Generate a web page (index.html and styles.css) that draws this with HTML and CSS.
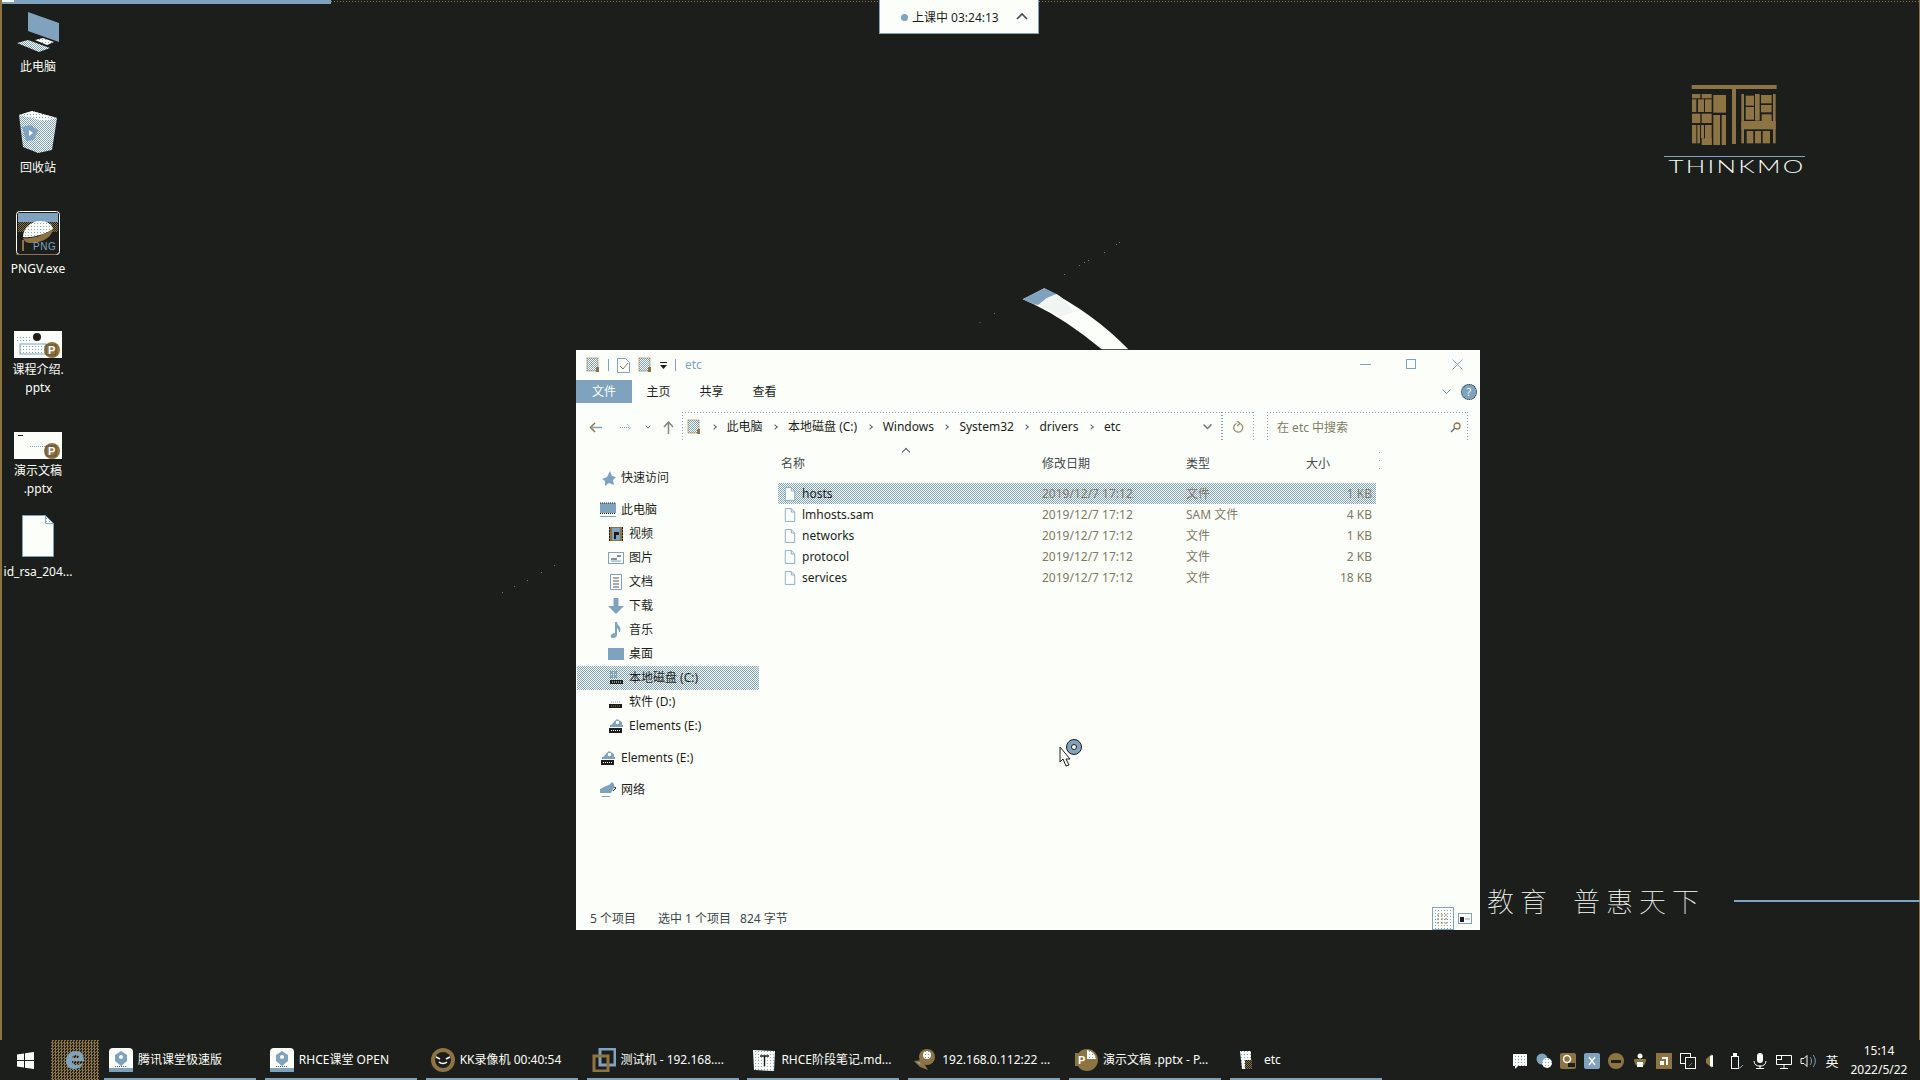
FILE: index.html
```html
<!DOCTYPE html>
<html lang="zh-CN">
<head>
<meta charset="utf-8">
<title>etc</title>
<link rel="stylesheet" href="styles.css">
</head>
<body>
<svg class="defs" aria-hidden="true">
  <defs>
    <pattern id="d-bw" width="2" height="2" patternUnits="userSpaceOnUse"><rect width="2" height="2" fill="#fcfff9"/><rect width="1" height="1" fill="#7fa3bf"/><rect x="1" y="1" width="1" height="1" fill="#7fa3bf"/></pattern>
    <pattern id="d-w" width="3" height="3" patternUnits="userSpaceOnUse"><rect width="3" height="3" fill="#fcfff9"/><rect width="1" height="1" fill="#7fa3bf"/></pattern>
    <pattern id="d-br" width="2" height="2" patternUnits="userSpaceOnUse"><rect width="2" height="2" fill="#1c1e1b"/><rect width="1" height="1" fill="#8f7443"/><rect x="1" y="1" width="1" height="1" fill="#8f7443"/></pattern>
    <symbol id="i-file" viewBox="0 0 14 16"><path d="M1.500.5h7l4 4v11h-11z" fill="#fcfff9" stroke="#7fa3bf"/><path d="M8.500.5v4h4" fill="none" stroke="#7fa3bf"/></symbol>
    <symbol id="i-folderdoc" viewBox="0 0 14 16"><rect x="1" y="1" width="11" height="13" fill="url(#d-bw)" stroke="#8f7443" stroke-width=".6"/><rect x="10" y="10" width="3" height="5" fill="#8f7443"/></symbol>
    <symbol id="i-quick" viewBox="0 0 16 16"><path d="M10 1l2 5 4 1-3 3 1 5-5-2-4 3 0-5-3-2 5-2z" fill="#7fa3bf"/></symbol>
    <symbol id="i-pc" viewBox="0 0 16 16"><rect y="1" width="16" height="10" fill="#7fa3bf"/><path d="M0 1h16" stroke="#1c1e1b" stroke-dasharray="1 1"/><path d="M0 11.500h16" stroke="#1c1e1b" stroke-dasharray="1 1"/><rect y="14" width="16" height="1" fill="#7fa3bf"/></symbol>
    <symbol id="i-video" viewBox="0 0 16 16"><rect x="1" y="1" width="14" height="14" fill="#8f7443"/><rect x="4" y="2" width="8" height="12" fill="#7fa3bf"/><path d="M1.500 1v14M14.500 1v14" stroke="#1c1e1b" stroke-dasharray="2 1"/><path d="M6 6h5v3H8v4H6z" fill="#1c1e1b"/></symbol>
    <symbol id="i-pic" viewBox="0 0 16 16"><rect x=".5" y="2.500" width="15" height="11" fill="#fcfff9" stroke="#7fa3bf"/><path d="M3 9h6M9 6h4" stroke="#1c1e1b"/><path d="M3 11h10" stroke="#7fa3bf"/></symbol>
    <symbol id="i-doc" viewBox="0 0 16 16"><path d="M2.500.5h11v15h-11z" fill="#fcfff9" stroke="#7fa3bf"/><path d="M5 4h6M5 7h6M5 10h6M5 13h6" stroke="#556"/></symbol>
    <symbol id="i-down" viewBox="0 0 16 16"><path d="M5.500 0h5v8H16l-8 8-8-8h5.500z" fill="#7fa3bf"/></symbol>
    <symbol id="i-music" viewBox="0 0 16 16"><path d="M7 0h2c0 4 5 4 3 10h-1c0-2-1-3-2-4v7c0 2-2 3-4 3s-3-2-2-3 2-2 4-2z" fill="#7fa3bf"/></symbol>
    <symbol id="i-desk" viewBox="0 0 16 16"><rect y="2" width="16" height="12" fill="#7fa3bf"/></symbol>
    <symbol id="i-win" viewBox="0 0 16 16"><rect x="2" y="1" width="3" height="3" fill="#7fa3bf"/><rect x="6" y="1" width="3" height="3" fill="#7fa3bf"/><rect x="2" y="5" width="3" height="3" fill="#7fa3bf"/><rect x="6" y="5" width="3" height="3" fill="#7fa3bf"/><rect x="2" y="10" width="13" height="4" fill="#1c1e1b"/><path d="M4 12h9" stroke="#fcfff9" stroke-dasharray="1 1"/></symbol>
    <symbol id="i-drive" viewBox="0 0 16 16"><path d="M3 8h10" stroke="#7fa3bf" stroke-dasharray="1 1"/><rect x="1" y="10" width="13" height="4" fill="#1c1e1b"/><path d="M3 12h9" stroke="#8f7443" stroke-dasharray="1 1"/></symbol>
    <symbol id="i-ext" viewBox="0 0 16 16"><path d="M9 1l5 3v3H3z" fill="#7fa3bf"/><path d="M8 3h3v3H8z" fill="#fcfff9"/><rect x="2" y="7" width="13" height="2" fill="#7fa3bf"/><rect x="1" y="10" width="13" height="5" fill="#1c1e1b"/><path d="M3 12.500h9" stroke="#fcfff9" stroke-dasharray="1 1"/></symbol>
    <symbol id="i-net" viewBox="0 0 16 16"><path d="M0 7l6-3 3-1 3-3 2 2v4l-3 5H0z" fill="#7fa3bf"/><path d="M14 5l2 1-3 3" stroke="#1c1e1b" fill="none"/><rect x="2" y="14" width="8" height="1" fill="#7fa3bf"/></symbol>
    <symbol id="i-tk" viewBox="0 0 24 24"><rect width="24" height="24" rx="4" fill="#fcfff9"/><path d="M12 3l6 4v6l-6 5-6-5V7z" fill="#7fa3bf"/><circle cx="12" cy="9" r="2" fill="#fcfff9"/><rect y="20" width="24" height="4" fill="#7fa3bf"/><path d="M6 18.500h12" stroke="#556" stroke-dasharray="1 1"/></symbol>
  </defs>
</svg>

<main class="desktop">
  <div class="progress"><span class="progress-head"></span></div>
  <div class="top-dots"></div>
  <div class="edge-left"></div>
  <div class="edge-right"></div>

  <div class="dicon d1">
    <svg class="dimg" width="48" height="44" viewBox="14 10 48 44"><path d="M28 12l31 11v19L28 31z" fill="#7fa3bf"/><path d="M35 40l8-2 11 4-7 3z" fill="url(#d-w)"/><path d="M17 43l11-3 22 8-11 4z" fill="url(#d-bw)"/></svg>
    <span class="dlabel">此电脑</span>
  </div>
  <div class="dicon d2">
    <svg class="dimg" width="44" height="44" viewBox="16 110 44 44"><path d="M19 115l13-4 25 7-5 32-14 3-15-6z" fill="url(#d-bw)"/><path d="M32 111l25 7-14 3-11-3-13-3z" fill="url(#d-w)"/><path d="M22 127l8-2 8 5-4 10-8 1z" fill="#7fa3bf"/><path d="M29 130l4 3-4 3z" fill="#fcfff9"/></svg>
    <span class="dlabel">回收站</span>
  </div>
  <div class="dicon d3">
    <svg class="dimg" width="44" height="44" viewBox="0 0 44 44"><rect x=".5" y=".5" width="43" height="43" rx="3" fill="#1c1e1b" stroke="#fcfff9"/><path d="M.5 43.500h40" stroke="#8f7443"/><rect x="2" y="2" width="40" height="9" fill="#7fa3bf"/><rect x="2" y="11" width="40" height="10" fill="url(#d-br)"/><path d="M7 26c0-9 8-16 17-16 7 0 12 3 13 8-9 6-22 9-30 8z" fill="url(#d-w)"/><path d="M7 27c9 1 19-2 30-9-1 8-10 13-20 14-5 0-8 0-10-5z" fill="#8f7443"/><rect x="6" y="29" width="2" height="11" fill="#8f7443"/><text class="png-txt" x="17" y="39">PNG</text></svg>
    <span class="dlabel">PNGV.exe</span>
  </div>
  <div class="dicon d4">
    <svg class="dimg" width="48" height="27" viewBox="0 0 48 27"><rect width="48" height="27" fill="#fcfff9"/><rect x="3" y="4" width="14" height="8" fill="url(#d-w)"/><rect x="6" y="13" width="26" height="10" fill="url(#d-w)" stroke="#7fa3bf"/><circle cx="23" cy="6" r="4" fill="#1c1e1b"/><circle cx="38" cy="19" r="8" fill="#8f7443"/><rect x="32" y="14" width="10" height="10" fill="#8f7443" stroke="#1c1e1b" stroke-width=".4"/><text class="p-txt" x="34" y="23">P</text></svg>
    <span class="dlabel">课程介绍.<br>pptx</span>
  </div>
  <div class="dicon d5">
    <svg class="dimg" width="48" height="27" viewBox="0 0 48 27"><rect width="48" height="27" fill="#fcfff9"/><path d="M4 3.500h5" stroke="#1c1e1b"/><path d="M16 14.500h15" stroke="#7fa3bf" stroke-dasharray="1 1"/><circle cx="38" cy="19" r="8" fill="#8f7443"/><rect x="32" y="14" width="10" height="10" fill="#8f7443" stroke="#1c1e1b" stroke-width=".4"/><text class="p-txt" x="34" y="23">P</text></svg>
    <span class="dlabel">演示文稿<br>.pptx</span>
  </div>
  <div class="dicon d6">
    <svg class="dimg" width="32" height="42" viewBox="0 0 32 42"><path d="M.5.500h23l8 8v33H.5z" fill="#fcfff9" stroke="#7fa3bf"/><path d="M23.500.500v8h8z" fill="url(#d-w)" stroke="#7fa3bf"/></svg>
    <span class="dlabel">id_rsa_204...</span>
  </div>

  <svg class="swirl" width="250" height="140" viewBox="0 0 750 420"><path d="M218 238L283 205Q430 280 535 388H455Q350 300 250 252z" fill="#fcfff9"/><path d="M218 238L283 205 320 222 290 235 265 255 250 252z" fill="#7fa3bf"/><path d="M265 255L290 235 320 222Q350 240 370 275L335 290z" fill="url(#d-w)"/><g fill="#8f7443"><rect x="88" y="306" width="3" height="3"/><rect x="132" y="279" width="3" height="3"/><rect x="342" y="162" width="3" height="3"/><rect x="387" y="135" width="3" height="3"/><rect x="402" y="126" width="3" height="3"/><rect x="414" y="120" width="3" height="3"/><rect x="462" y="96" width="3" height="3"/><rect x="498" y="72" width="3" height="3"/><rect x="507" y="66" width="3" height="3"/></g></svg>
  <svg class="specks" width="70" height="40" viewBox="0 0 70 40"><g fill="#8f7443"><rect x="2" y="32" width="1" height="1"/><rect x="14" y="26" width="1" height="1"/><rect x="27" y="20" width="1" height="1"/><rect x="41" y="12" width="1" height="1"/><rect x="54" y="5" width="1" height="1"/></g></svg>

  <div class="classbar">
    <span class="class-dot"></span>
    <span class="class-text">上课中 03:24:13</span>
    <svg class="class-caret" width="12" height="8" viewBox="0 0 12 8"><path d="M1 7l5-5 5 5" fill="none" stroke="#3b4a56" stroke-width="1.600"/></svg>
  </div>

  <div class="logo">
    <svg width="200" height="88" viewBox="0 0 600 264"><g fill="#8f7443"><rect x="155" y="45" width="255" height="12"/><rect x="276" y="57" width="12" height="165"/><rect x="156" y="72" width="25" height="13"/><rect x="185" y="72" width="30" height="13"/><rect x="156" y="88" width="13" height="38"/><rect x="174" y="88" width="18" height="38"/><rect x="195" y="88" width="20" height="38"/><rect x="220" y="75" width="38" height="53"/><rect x="156" y="131" width="25" height="28"/><rect x="185" y="131" width="30" height="28"/><rect x="220" y="135" width="20" height="90"/><rect x="245" y="135" width="13" height="90"/><rect x="156" y="165" width="13" height="55"/><rect x="172" y="165" width="8" height="55"/><rect x="183" y="165" width="9" height="40"/><rect x="195" y="165" width="20" height="60"/><rect x="185" y="205" width="30" height="20"/><rect x="304" y="72" width="8" height="148"/><rect x="345" y="72" width="14" height="80"/><rect x="317" y="77" width="25" height="30"/><rect x="317" y="111" width="25" height="38"/><rect x="363" y="75" width="32" height="25"/><rect x="363" y="105" width="32" height="22"/><rect x="365" y="133" width="30" height="20"/><rect x="399" y="72" width="8" height="148"/><rect x="304" y="153" width="103" height="25"/><rect x="320" y="183" width="20" height="37"/><rect x="345" y="183" width="18" height="37"/><rect x="368" y="183" width="22" height="37"/></g><rect x="72" y="258" width="423" height="3" fill="#7fa3bf"/></svg>
    <div class="logo-text">THINKMO</div>
  </div>

  <div class="slogan"><span>教育</span><span>普惠天下</span></div>
  <div class="slogan-line"></div>

  <section class="win">
    <header class="titlebar">
      <svg class="qa" width="14" height="16" viewBox="0 0 14 16"><use href="#i-folderdoc"/></svg>
      <span class="qa-sep"></span>
      <svg class="qa qa-check" width="13" height="16" viewBox="0 0 13 16"><path d="M.5 1.500h8l4 4v10H.5z" fill="#fcfff9" stroke="#7fa3bf"/><path d="M3 9l3 3 5-6" fill="none" stroke="#8f7443"/></svg>
      <svg class="qa qa-third" width="14" height="16" viewBox="0 0 14 16"><use href="#i-folderdoc"/></svg>
      <svg class="qa qa-drop" width="7" height="7" viewBox="0 0 7 7"><path d="M0 0h7v1H0zM0 3h7L3.500 7z" fill="#1c1e1b"/></svg>
      <span class="qa-sep"></span>
      <span class="title">etc</span>
      <div class="winctl">
        <svg width="11" height="11" viewBox="0 0 11 11"><path d="M0 5.500h11" stroke="#7fa3bf"/></svg>
        <svg width="11" height="11" viewBox="0 0 11 11"><rect x=".5" y=".5" width="9" height="9" fill="none" stroke="#7fa3bf"/></svg>
        <svg width="11" height="11" viewBox="0 0 11 11"><path d="M.5.500l10 10M10.500.500l-10 10" stroke="#7fa3bf"/></svg>
      </div>
    </header>

    <nav class="tabs">
      <span class="tab tab-active">文件</span>
      <span class="tab">主页</span>
      <span class="tab">共享</span>
      <span class="tab">查看</span>
      <svg class="collapse" width="9" height="6" viewBox="0 0 9 6"><path d="M.5.500l4 4 4-4" fill="none" stroke="#7fa3bf"/></svg>
      <span class="help">?</span>
    </nav>

    <div class="addr-row">
      <div class="navbtns">
        <svg class="nav-back" width="13" height="11" viewBox="0 0 13 11"><path d="M6 1L1.500 5.500 6 10" fill="none" stroke="#8f7443" stroke-width="1.500"/><path d="M2 5.500h11" stroke="#7fa3bf" stroke-width="1.500"/></svg>
        <svg class="nav-fwd" width="11" height="9" viewBox="0 0 11 9"><path d="M7 1l3.500 3.500L7 8M0 4.500h10" fill="none" stroke="#7fa3bf" stroke-dasharray="1 1"/></svg>
        <svg class="nav-drop" width="6" height="4" viewBox="0 0 6 4"><path d="M.5.500L3 3 5.500.500" fill="none" stroke="#6c7a80"/></svg>
        <svg class="nav-up" width="11" height="13" viewBox="0 0 11 13"><path d="M1 6l4.500-5L10 6M5.500 1.500V13" fill="none" stroke="#7a8a80" stroke-width="1.500"/></svg>
      </div>
      <div class="addr dots">
        <svg class="addr-ico" width="14" height="16" viewBox="0 0 14 16"><use href="#i-folderdoc"/></svg>
        <span class="crumb-sep"></span><span class="crumb">此电脑</span>
        <span class="crumb-sep"></span><span class="crumb">本地磁盘 (C:)</span>
        <span class="crumb-sep"></span><span class="crumb">Windows</span>
        <span class="crumb-sep"></span><span class="crumb">System32</span>
        <span class="crumb-sep"></span><span class="crumb">drivers</span>
        <span class="crumb-sep"></span><span class="crumb">etc</span>
        <svg class="addr-drop" width="9" height="6" viewBox="0 0 9 6"><path d="M.5.500l4 4 4-4" fill="none" stroke="#6c7a80" stroke-width="1.500"/></svg>
      </div>
      <div class="refresh dots">
        <svg width="11" height="12" viewBox="0 0 11 12"><path d="M7 2.500a4.500 4.500 0 1 1-3.500 0M4 0l3 2.500L4 5" fill="none" stroke="#8f8a60" stroke-width="1.200"/></svg>
      </div>
      <div class="search dots">
        <span class="search-text">在 etc 中搜索</span>
        <svg width="11" height="11" viewBox="0 0 11 11"><circle cx="7" cy="4" r="3" fill="none" stroke="#8f7443" stroke-width="1.300"/><path d="M5 6l-4 4" stroke="#6c7a80" stroke-width="1.600"/></svg>
      </div>
    </div>

    <div class="content">
      <aside class="side">
        <div class="srow l1"><svg class="sico"><use href="#i-quick"/></svg>快速访问</div>
        <div class="sgroup">
          <div class="srow l1"><svg class="sico"><use href="#i-pc"/></svg>此电脑</div>
          <div class="srow l2"><svg class="sico"><use href="#i-video"/></svg>视频</div>
          <div class="srow l2"><svg class="sico"><use href="#i-pic"/></svg>图片</div>
          <div class="srow l2"><svg class="sico"><use href="#i-doc"/></svg>文档</div>
          <div class="srow l2"><svg class="sico"><use href="#i-down"/></svg>下载</div>
          <div class="srow l2"><svg class="sico"><use href="#i-music"/></svg>音乐</div>
          <div class="srow l2"><svg class="sico"><use href="#i-desk"/></svg>桌面</div>
          <div class="srow l2 dither"><svg class="sico"><use href="#i-win"/></svg>本地磁盘 (C:)</div>
          <div class="srow l2"><svg class="sico"><use href="#i-drive"/></svg>软件 (D:)</div>
          <div class="srow l2"><svg class="sico"><use href="#i-ext"/></svg>Elements (E:)</div>
        </div>
        <div class="sgroup2"><div class="srow l1"><svg class="sico"><use href="#i-ext"/></svg>Elements (E:)</div></div>
        <div class="sgroup2"><div class="srow l1"><svg class="sico"><use href="#i-net"/></svg>网络</div></div>
      </aside>

      <section class="list">
        <div class="lhead">
          <span class="sort-caret"></span>
          <span class="h-name">名称</span><span>修改日期</span><span>类型</span><span>大小</span>
        </div>
        <div class="lrow dither"><span class="fname"><svg class="fico"><use href="#i-file"/></svg>hosts</span><span class="meta">2019/12/7 17:12</span><span class="meta">文件</span><span class="meta size">1 KB</span></div>
        <div class="lrow"><span class="fname"><svg class="fico"><use href="#i-file"/></svg>lmhosts.sam</span><span class="meta">2019/12/7 17:12</span><span class="meta">SAM 文件</span><span class="meta size">4 KB</span></div>
        <div class="lrow"><span class="fname"><svg class="fico"><use href="#i-file"/></svg>networks</span><span class="meta">2019/12/7 17:12</span><span class="meta">文件</span><span class="meta size">1 KB</span></div>
        <div class="lrow"><span class="fname"><svg class="fico"><use href="#i-file"/></svg>protocol</span><span class="meta">2019/12/7 17:12</span><span class="meta">文件</span><span class="meta size">2 KB</span></div>
        <div class="lrow"><span class="fname"><svg class="fico"><use href="#i-file"/></svg>services</span><span class="meta">2019/12/7 17:12</span><span class="meta">文件</span><span class="meta size">18 KB</span></div>
      </section>
    </div>

    <footer class="status">
      <span>5 个项目</span><span class="st2">选中 1 个项目</span><span class="st3">824 字节</span>
      <div class="views">
        <svg width="22" height="23" viewBox="0 0 22 23"><rect x=".5" y=".5" width="21" height="22" fill="url(#d-w)" stroke="#7fa3bf"/><path d="M5 8h12M5 12h12M5 16h12" stroke="#8f7443" stroke-dasharray="2 2"/></svg>
        <svg width="14" height="11" viewBox="0 0 14 11"><rect x=".5" y=".5" width="13" height="10" fill="#fcfff9" stroke="#7fa3bf"/><rect x="2" y="4" width="4" height="5" fill="#1c1e1b"/><path d="M7 6h5" stroke="#7fa3bf"/></svg>
      </div>
    </footer>
  </section>

  <svg class="cursor" width="24" height="28" viewBox="0 0 24 28"><path d="M1 8v15l3-3 3 7 3-1-3-6h4z" fill="#fcfff9" stroke="#1c1e1b"/><ellipse cx="15" cy="8" rx="7.500" ry="7.500" fill="#7fa3bf" stroke="#1c1e1b"/><circle cx="15" cy="8" r="2.500" fill="#fcfff9" stroke="#1c1e1b"/></svg>
</main>

<footer class="taskbar">
  <div class="start"><svg width="17" height="17" viewBox="0 0 17 17"><path d="M0 2.500l7-1v6.500H0zM8 1.300L17 0v8H8zM0 9h7v6.500l-7-1zM8 9h9v8l-9-1.300z" fill="#fcfff9"/></svg></div>
  <div class="edge"><svg width="20" height="20" viewBox="0 0 20 20"><path d="M17 15c-2 3-5 4-8 4-5 0-8-3-8-8C1 5 5 1 11 1c5 0 8 3 8 10H7c0 3 2 4 5 4 2 0 4-1 5-2zM7 8h7c0-2-1-3-3-3-2 0-4 1-4 3z" fill="#7fa3bf"/></svg></div>
  <div class="apps">
    <div class="app"><svg class="aico"><use href="#i-tk"/></svg>腾讯课堂极速版</div>
    <div class="app"><svg class="aico"><use href="#i-tk"/></svg>RHCE课堂 OPEN</div>
    <div class="app"><svg class="aico" viewBox="0 0 24 24"><ellipse cx="12" cy="12" rx="12" ry="12" fill="#8f7443"/><ellipse cx="12" cy="12" rx="8" ry="8" fill="#1c1e1b"/><path d="M5 9l4 2M19 9l-4 2M8 14c2 2 6 2 8 0" stroke="#fcfff9" stroke-width="1.500" fill="none"/></svg>KK录像机 00:40:54</div>
    <div class="app"><svg class="aico" viewBox="0 0 24 24"><rect x="8" y="1" width="15" height="16" fill="none" stroke="#7fa3bf" stroke-width="3"/><rect x="2" y="8" width="14" height="15" fill="none" stroke="#8f7443" stroke-width="3"/></svg>测试机 - 192.168....</div>
    <div class="app"><svg class="aico" viewBox="0 0 24 24"><path d="M1 2l22 1-1 20-20-1z" fill="url(#d-w)"/><path d="M8 8h9M12.500 8v10" stroke="#1c1e1b" stroke-width="1.500"/></svg>RHCE阶段笔记.md...</div>
    <div class="app"><svg class="aico" viewBox="0 0 24 24"><circle cx="14" cy="9" r="8" fill="#8f7443"/><circle cx="14" cy="7" r="4" fill="url(#d-w)"/><path d="M1 13l8-1 6 10-8-3z" fill="#8f7443"/><path d="M3 14l4 0 1 3z" fill="#7fa3bf"/></svg>192.168.0.112:22 ...</div>
    <div class="app"><svg class="aico" viewBox="0 0 24 24"><circle cx="13" cy="12" r="11" fill="#8f7443"/><path d="M13 2a10 10 0 0 1 9 9h-9z" fill="url(#d-w)"/><rect x="1" y="5" width="12" height="13" fill="#8f7443"/><text class="p-txt" x="4" y="16">P</text></svg>演示文稿 .pptx - P...</div>
    <div class="app"><svg class="aico" viewBox="0 0 24 24"><path d="M5 3h11v18H7z" fill="url(#d-w)"/><rect x="10" y="12" width="7" height="9" fill="url(#d-br)"/></svg>etc</div>
  </div>
  <div class="tray">
    <svg class="tico" viewBox="0 0 16 16"><path d="M1 1h14v12H6l-3 3v-3H1z" fill="url(#d-w)"/></svg>
    <svg class="tico" viewBox="0 0 16 16"><circle cx="6" cy="6" r="5.500" fill="#7fa3bf"/><circle cx="11" cy="10" r="5" fill="url(#d-w)"/></svg>
    <svg class="tico" viewBox="0 0 16 16"><rect width="16" height="16" rx="2" fill="#8f7443"/><circle cx="7" cy="6" r="3.500" fill="none" stroke="#fcfff9" stroke-width="1.500"/><rect x="8" y="10" width="7" height="4" fill="#1c1e1b"/></svg>
    <svg class="tico" viewBox="0 0 16 16"><rect width="16" height="16" rx="2" fill="#7fa3bf"/><path d="M5 4l6 8M11 4l-6 8" stroke="#fcfff9" stroke-width="1.500"/></svg>
    <svg class="tico" viewBox="0 0 16 16"><ellipse cx="8" cy="8" rx="8" ry="8" fill="#8f7443"/><path d="M3 7h10v3H3z" fill="#1c1e1b"/></svg>
    <svg class="tico" viewBox="0 0 16 16"><circle cx="8" cy="3" r="2.500" fill="#fcfff9"/><path d="M2 6h12c0 5-3 8-6 8S2 11 2 6z" fill="#8f7443"/><path d="M5 9h6v5H5z" fill="#fcfff9"/></svg>
    <svg class="tico" viewBox="0 0 16 16"><rect width="16" height="16" fill="#8f7443"/><path d="M6 4h6v8h-2V6H6zM4 8h4v4H4z" fill="#fcfff9"/></svg>
    <svg class="tico" viewBox="0 0 16 16"><rect x=".5" y=".5" width="10" height="10" fill="none" stroke="#fcfff9"/><rect x="5.500" y="4.500" width="10" height="11" fill="#1c1e1b" stroke="#fcfff9"/><path d="M9 13l3-3" stroke="#8f7443"/></svg>
    <svg class="tico" viewBox="0 0 16 16"><path d="M2 6l6-5v14L2 10z" fill="#8f7443"/><path d="M6 3v10l3 1V2z" fill="#fcfff9"/></svg>
    <svg class="tico" viewBox="0 0 16 16"><rect x="3.500" y="3.500" width="7" height="12" fill="none" stroke="#fcfff9"/><rect x="5" y="0" width="4" height="3" fill="#fcfff9"/><path d="M10 14l2 1 3-3" stroke="#7fa3bf" fill="none"/></svg>
    <svg class="tico" viewBox="0 0 16 16"><rect x="5" width="6" height="10" rx="3" fill="#fcfff9"/><path d="M2 8c0 7 12 7 12 0M8 12v3M4 15.500h8" fill="none" stroke="#fcfff9"/></svg>
    <svg class="tico" viewBox="0 0 16 16"><rect x=".5" y="2.500" width="5" height="4" fill="none" stroke="#fcfff9"/><path d="M5.500 2.500h10v9H.5v-5M8 11.500v4M4 15.500h8" fill="none" stroke="#fcfff9"/></svg>
    <svg class="tico" viewBox="0 0 16 16"><path d="M1 5.500h3l3-3v11l-3-3H1z" fill="none" stroke="#fcfff9"/><path d="M10 4c2 2 2 6 0 8M13 2c3 3 3 9 0 12" fill="none" stroke="#7fa3bf"/></svg>
    <span class="ime">英</span>
  </div>
  <div class="clock"><span>15:14</span><span>2022/5/22</span></div>
</footer>
</body>
</html>
```

FILE: styles.css
```css
* { box-sizing: border-box; }
html, body { margin: 0; width: 1920px; height: 1080px; overflow: hidden; }
body {
  background: #1c1e1b;
  color: #1c1e1b;
  font: 12px/18px "Noto Sans", "Noto Sans CJK SC", sans-serif;
  display: flex;
  flex-direction: column;
}
svg { display: block; flex: none; }
.defs { position: absolute; width: 0; height: 0; }
.dither { background: repeating-conic-gradient(#7fa3bf 0 25%, #fcfff9 0 50%) 0 0 / 2px 2px; }
.dots {
  background:
    repeating-linear-gradient(90deg, #7fa3bf 0 1px, transparent 1px 3px) top / 100% 1px no-repeat,
    repeating-linear-gradient(180deg, #7fa3bf 0 1px, transparent 1px 3px) left / 1px 100% no-repeat,
    repeating-linear-gradient(180deg, #7fa3bf 0 1px, transparent 1px 3px) right / 1px 100% no-repeat;
}

/* desktop canvas */
.desktop { position: relative; height: 1040px; flex: none; }
.progress { position: absolute; left: 0; top: 0; width: 331px; height: 4px; background: #7fa3bf; }
.progress-head { display: block; width: 12px; height: 2px; background: #fcfff9; margin-left: 2px; }
.top-dots {
  position: absolute; left: 331px; right: 0; top: 1px; height: 1px;
  background: repeating-linear-gradient(90deg, #8f7443 0 1px, transparent 1px 3px);
}
.edge-left { position: absolute; left: 0; top: 0; width: 2px; height: 1040px; background: #8f7443; }
.edge-right { position: absolute; right: 0; top: 0; width: 1px; height: 1040px; background: #8f7443; }

.dicon { position: absolute; left: 2px; width: 72px; display: flex; flex-direction: column; align-items: center; color: #fcfff9; text-align: center; }
.dlabel { white-space: nowrap; line-height: 18px; }
.d1 { top: 10px; gap: 4px; }
.d2 { top: 110px; gap: 5px; }
.d3 { top: 211px; gap: 5px; }
.d4 { top: 331px; gap: 3px; }
.d5 { top: 432px; gap: 3px; }
.d6 { top: 515px; gap: 6px; }
.png-txt { font: 10px "Liberation Sans", sans-serif; fill: #7fa3bf; letter-spacing: .5px; }
.p-txt { font: bold 11px "Liberation Sans", sans-serif; fill: #fcfff9; }

.swirl { position: absolute; left: 950px; top: 220px; }
.specks { position: absolute; left: 500px; top: 560px; }

.classbar {
  position: absolute; left: 879px; top: 0; width: 160px; height: 34px;
  display: flex; align-items: center; padding: 2px 0 0 21px;
  background: #fcfff9; border: solid #7fa3bf; border-width: 0 1px 1px;
}
.class-dot { width: 7px; height: 7px; border-radius: 50%; background: #7fa3bf; }
.class-text { margin-left: 4px; white-space: nowrap; }
.class-caret { margin-left: 17px; margin-top: -4px; }

.logo { position: absolute; left: 1640px; top: 70px; width: 200px; }
.logo-text {
  position: absolute; left: -3px; top: 87px; width: 200px; text-align: center;
  color: #fcfff9; font: 300 17px/20px Lato, sans-serif; letter-spacing: 1.5px;
  transform: scaleX(1.52);
}
.slogan { position: absolute; left: 1487px; top: 885px; color: #fcfff9; font: 100 27px/32px "Noto Sans CJK SC", sans-serif; letter-spacing: 6px; white-space: nowrap; display: flex; gap: 20px; }
.slogan-line { position: absolute; left: 1734px; right: 0; top: 900px; height: 2px; background: #7fa3bf; }
.cursor { position: absolute; left: 1059px; top: 739px; }

/* explorer window */
.win {
  position: absolute; left: 576px; top: 350px; width: 904px; height: 580px;
  background: #fcfff9; display: flex; flex-direction: column;
}
.titlebar { height: 30px; display: flex; align-items: center; padding-left: 10px; flex: none; }
.qa-sep { width: 1px; height: 12px; background: #7fa3bf; margin: 0 8px; }
.qa-third { margin-left: 8px; }
.qa-drop { margin-left: 8px; }
.title { color: #7fa3bf; margin-left: 1px; }
.winctl { margin-left: auto; margin-right: 17px; margin-bottom: 2px; display: flex; gap: 35px; }

.tabs { height: 23px; display: flex; align-items: center; flex: none; padding-top: 1px; }
.tab { width: 53px; text-align: center; }
.tab-active { width: 56px; height: 23px; line-height: 23px; background: #7fa3bf; color: #fcfff9; margin-top: -1px; }
.collapse { margin-left: auto; margin-right: 10px; }
.help {
  width: 16px; height: 16px; border-radius: 50%; margin-right: 3px;
  background: #7fa3bf; border: 1px dotted #1c1e1b; color: #fcfff9;
  font-size: 11px; line-height: 14px; text-align: center;
}

.addr-row { display: flex; height: 30px; margin-top: 9px; flex: none; }
.navbtns { width: 106px; display: flex; align-items: center; padding-left: 13px; }
.nav-fwd { margin-left: 18px; }
.nav-drop { margin-left: 14px; }
.nav-up { margin-left: 12px; }
.addr { width: 540px; display: flex; align-items: center; padding-left: 5px; }
.crumb { white-space: nowrap; }
.crumb-sep { width: 4px; height: 4px; border-top: 1px solid #556672; border-right: 1px solid #556672; transform: rotate(45deg); margin: 0 11px 0 10.5px; }
.addr-drop { margin-left: auto; margin-right: 10px; }
.refresh { width: 32px; display: flex; align-items: center; justify-content: center; }
.search { width: 201px; margin-left: 13px; display: flex; align-items: center; justify-content: space-between; padding: 1px 7px 0 10px; }
.search-text { color: #7d7a63; }

.content { flex: 1; display: flex; min-height: 0; }
.side { width: 200px; padding: 24px 0 0 1px; flex: none; }
.srow { height: 24px; display: flex; align-items: center; gap: 5px; width: 182px; white-space: nowrap; }
.l1 { padding-left: 23px; }
.l2 { padding-left: 31px; }
.sico { width: 16px; height: 16px; }
.sgroup { margin-top: 8px; }
.sgroup2 { margin-top: 8px; }

.list { flex: 1; padding: 7px 0 0 2px; }
.lhead, .lrow { display: grid; grid-template-columns: 264px 144px 120px 70px; width: 598px; align-items: center; }
.lhead { height: 30px; position: relative; color: #3f4a4c; margin-bottom: 4px; }
.lhead::after { content: ""; position: absolute; left: 601px; top: 3px; width: 1px; height: 24px; background: repeating-linear-gradient(180deg, #7fa3bf 0 1px, transparent 1px 8px); }
.sort-caret { position: absolute; left: 125px; top: 0; width: 6px; height: 6px; border-left: 1px solid #556; border-top: 1px solid #556; transform: rotate(45deg); }
.h-name { padding-left: 3px; }
.lrow { height: 21px; }
.fname { display: flex; align-items: center; gap: 6px; padding-left: 6px; white-space: nowrap; }
.fico { width: 12px; height: 16px; }
.meta { color: #7d7a63; white-space: nowrap; }
.size { text-align: right; padding-right: 4px; }

.status { height: 25px; flex: none; display: flex; align-items: center; padding: 2px 8px 0 14px; color: #3a464c; }
.st2 { margin-left: 22px; }
.st3 { margin-left: 9px; }
.views { margin-left: auto; display: flex; align-items: center; gap: 4px; align-self: flex-end; }

/* taskbar */
.taskbar { height: 40px; flex: none; display: flex; color: #fcfff9; }
.start { width: 51px; display: flex; align-items: center; justify-content: center; }
.edge { width: 48px; display: flex; align-items: center; justify-content: center; background: repeating-conic-gradient(#8f7443 0 25%, #1c1e1b 0 50%) 0 0 / 3px 3px; margin-right: 5px; }
.apps { display: flex; gap: 8.85px; }
.app {
  width: 152px; display: flex; align-items: center; gap: 5px; padding: 2px 0 0 5px;
  border-bottom: 2px solid #7fa3bf; white-space: nowrap; overflow: hidden;
}
.aico { width: 24px; height: 24px; }
.tray { margin-left: auto; display: flex; align-items: center; gap: 8px; padding-top: 2px; }
.tico { width: 16px; height: 16px; }
.ime { width: 16px; text-align: center; font-size: 13px; }
.clock { width: 80px; display: flex; flex-direction: column; align-items: center; justify-content: center; line-height: 19px; padding-right: 2px; }
```
